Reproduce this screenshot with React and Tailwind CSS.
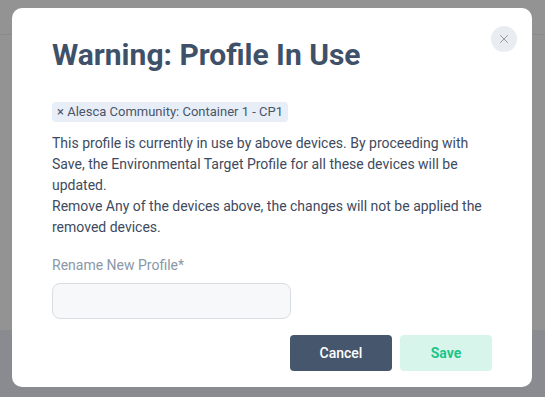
import { X } from "lucide-react";

export default function App() {
  const font = { fontFamily: "Roboto, 'Liberation Sans', sans-serif" };

  return (
    <div className="relative w-[545px] h-[397px] overflow-hidden bg-[#939393]" style={font}>
      {/* page behind the overlay */}
      <div className="flex flex-col h-full">
        <div className="h-[35px] border-b border-[#8a8a8a]" />
        <div className="grow" />
        <div className="h-[67px] bg-[#8a8b90]" />
      </div>

      {/* modal */}
      <div className="absolute left-[12px] top-[8px] w-[520px] h-[379px] bg-white rounded-[10px] px-[40px] pt-[29px]">
        <button className="absolute right-[15px] top-[18px] w-[26px] h-[26px] rounded-full bg-[#e9ecf0] flex items-center justify-center text-[#8a8f98]">
          <X size={14} strokeWidth={1.5} />
        </button>

        <h2 className="text-[30px] leading-[36px] font-bold text-[#3f5169]">Warning: Profile In Use</h2>

        <div className="mt-[29px] flex">
          <span className="bg-[#e8eef8] rounded-[4px] px-[5px] h-[20px] flex items-center text-[13px] text-[#4a5568]">
            × Alesca Community: Container 1 - CP1
          </span>
        </div>

        <p className="mt-[11px] text-[14px] leading-[21px] text-[#3e4a5e]">
          This profile is currently in use by above devices. By proceeding with Save, the Environmental Target Profile for all these devices will be updated.
          <br />
          Remove Any of the devices above, the changes will not be applied the removed devices.
        </p>

        <label className="block mt-[17px] text-[14px] leading-[20px] text-[#8a97a9]">Rename New Profile*</label>
        <input className="block mt-[8px] w-[239px] h-[36px] rounded-[8px] border border-[#dadde2] bg-[#f7f8fa] outline-none" />

        <div className="flex justify-end gap-[8px] mt-[16px]">
          <button className="w-[102px] h-[36px] rounded-[4px] bg-[#45566d] text-white text-[14px] font-medium">Cancel</button>
          <button className="w-[92px] h-[36px] rounded-[4px] bg-[#d8f5ec] text-[#1dc688] text-[14px] font-bold">Save</button>
        </div>
      </div>
    </div>
  );
}
